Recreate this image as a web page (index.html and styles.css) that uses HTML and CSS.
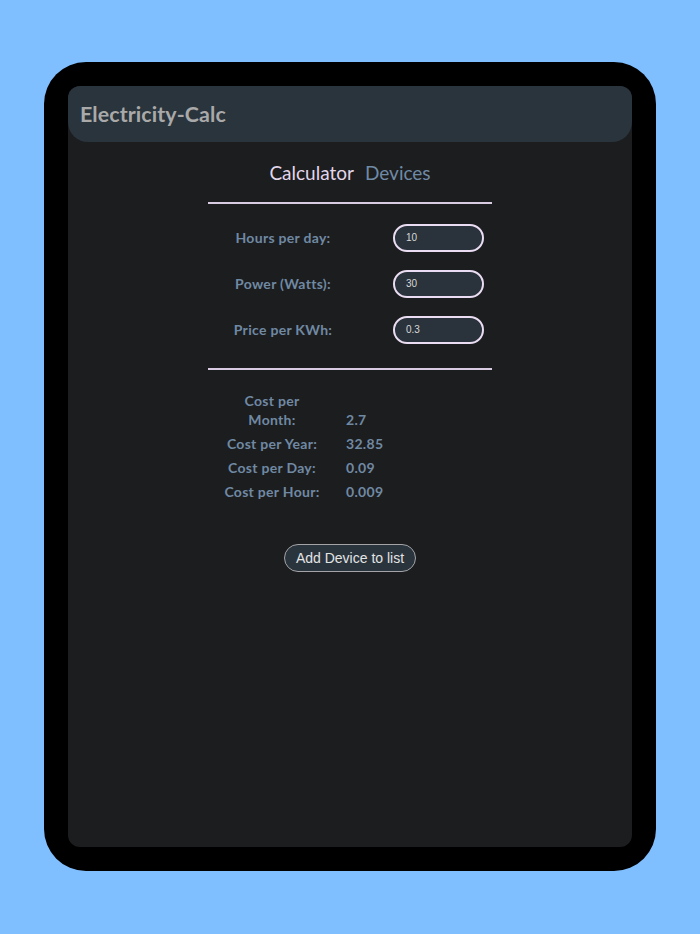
FILE: index.html
```html
<!DOCTYPE html>
<html>
<head>
<meta charset="utf-8">
<link rel="stylesheet" href="styles.css">
</head>
<body>
<div class="page">
  <div class="device">
    <div class="screen">
      <header class="appbar">
        <h1 class="title">Electricity-Calc</h1>
      </header>
      <main class="content">
        <nav class="tabs">
          <span class="tab tab-active">Calculator</span>
          <span class="tab">Devices</span>
        </nav>
        <div class="rule"></div>
        <div class="form">
          <label class="form-label">Hours per day:</label>
          <div class="field">10</div>
          <label class="form-label">Power (Watts):</label>
          <div class="field">30</div>
          <label class="form-label">Price per KWh:</label>
          <div class="field">0.3</div>
        </div>
        <div class="rule"></div>
        <div class="results">
          <div class="res-label">Cost per<br>Month:</div>
          <div class="res-value">2.7</div>
          <div class="res-label">Cost per Year:</div>
          <div class="res-value">32.85</div>
          <div class="res-label">Cost per Day:</div>
          <div class="res-value">0.09</div>
          <div class="res-label">Cost per Hour:</div>
          <div class="res-value">0.009</div>
        </div>
        <div class="actions">
          <button class="add-btn">Add Device to list</button>
        </div>
      </main>
    </div>
  </div>
</div>
</body>
</html>
```
FILE: styles.css
```css
html, body {
  margin: 0;
  padding: 0;
  background: #80bfff;
}
.page {
  padding: 62px 44px 0 44px;
  height: 934px;
  box-sizing: border-box;
}
.device {
  width: 612px;
  height: 809px;
  background: #000;
  border-radius: 42px;
  padding: 24px;
  box-sizing: border-box;
}
.screen {
  height: 100%;
  background: #1c1d1f;
  border-radius: 12px;
  display: flex;
  flex-direction: column;
}
.appbar {
  height: 56px;
  background: #2a343d;
  border-radius: 12px 12px 20px 20px;
  display: flex;
  align-items: center;
  padding-left: 12px;
}
.title {
  margin: 0;
  font-family: Lato, "Noto Sans", sans-serif;
  font-weight: 700;
  font-size: 21.4px;
  color: #a9a9a9;
  letter-spacing: 0.1px;
}
.content {
  width: 284px;
  margin: 0 auto;
  display: flex;
  flex-direction: column;
}
.tabs {
  display: flex;
  justify-content: center;
  gap: 11px;
  margin-top: 17px;
  height: 26px;
  align-items: center;
  font-family: Lato, "Noto Sans", sans-serif;
  font-size: 19px;
  font-weight: 400;
}
.tab {
  color: #6f8aa5;
}
.tab-active {
  color: #e2d6ea;
}
.rule {
  height: 2px;
  background: #d9cbe2;
}
.tabs + .rule {
  margin-top: 17px;
}
.form {
  display: grid;
  grid-template-columns: 150px 1fr;
  row-gap: 18px;
  align-items: center;
  margin: 20px 0 24px;
}
.form-label {
  text-align: center;
  font-family: Lato, "Noto Sans", sans-serif;
  font-weight: 700;
  font-size: 14px;
  letter-spacing: 0.3px;
  line-height: 17px;
  padding-bottom: 2px;
  color: #7089a3;
}
.field {
  margin-left: 35px;
  width: 91px;
  height: 28px;
  box-sizing: border-box;
  border: 2px solid #eadcf2;
  border-radius: 14px;
  background: #2a333b;
  color: #d8d8d8;
  font-family: "Liberation Sans", Arial, sans-serif;
  font-size: 10px;
  line-height: 24px;
  padding-left: 11px;
}
.results {
  display: grid;
  grid-template-columns: 128px auto;
  column-gap: 10px;
  row-gap: 5px;
  align-items: end;
  margin-top: 21px;
  font-family: Lato, "Noto Sans", sans-serif;
  font-weight: 700;
  font-size: 14px;
  letter-spacing: 0.3px;
  line-height: 19px;
  color: #7089a3;
}
.res-label {
  text-align: center;
}
.actions {
  display: flex;
  justify-content: center;
  margin-top: 43px;
}
.add-btn {
  height: 28px;
  padding: 0 10.5px;
  border: 1px solid #a4a4a8;
  border-radius: 14px;
  background: #2a343d;
  color: #e4e4e4;
  font-family: "Liberation Sans", Arial, sans-serif;
  font-size: 14px;
}
```
